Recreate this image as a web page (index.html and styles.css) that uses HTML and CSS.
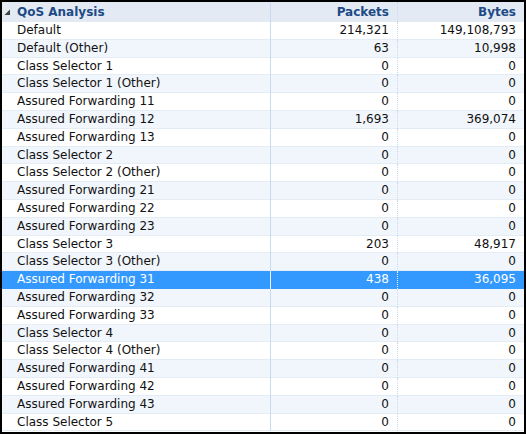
FILE: index.html
```html
<!DOCTYPE html>
<html>
<head>
<meta charset="utf-8">
<link rel="stylesheet" href="styles.css">
</head>
<body>
<div class="grid">
  <div class="row head">
    <div class="c1"><svg class="tri" width="7" height="7" viewBox="0 0 7 7"><polygon points="6,0.5 6,6 0.5,6" fill="#404040"/></svg>QoS Analysis</div>
    <div class="c2">Packets</div>
    <div class="c3">Bytes</div>
  </div>
  <div class="row"><div class="c1">Default</div><div class="c2">214,321</div><div class="c3">149,108,793</div></div>
  <div class="row alt"><div class="c1">Default (Other)</div><div class="c2">63</div><div class="c3">10,998</div></div>
  <div class="row"><div class="c1">Class Selector 1</div><div class="c2">0</div><div class="c3">0</div></div>
  <div class="row alt"><div class="c1">Class Selector 1 (Other)</div><div class="c2">0</div><div class="c3">0</div></div>
  <div class="row"><div class="c1">Assured Forwarding 11</div><div class="c2">0</div><div class="c3">0</div></div>
  <div class="row alt"><div class="c1">Assured Forwarding 12</div><div class="c2">1,693</div><div class="c3">369,074</div></div>
  <div class="row"><div class="c1">Assured Forwarding 13</div><div class="c2">0</div><div class="c3">0</div></div>
  <div class="row alt"><div class="c1">Class Selector 2</div><div class="c2">0</div><div class="c3">0</div></div>
  <div class="row"><div class="c1">Class Selector 2 (Other)</div><div class="c2">0</div><div class="c3">0</div></div>
  <div class="row alt"><div class="c1">Assured Forwarding 21</div><div class="c2">0</div><div class="c3">0</div></div>
  <div class="row"><div class="c1">Assured Forwarding 22</div><div class="c2">0</div><div class="c3">0</div></div>
  <div class="row alt"><div class="c1">Assured Forwarding 23</div><div class="c2">0</div><div class="c3">0</div></div>
  <div class="row"><div class="c1">Class Selector 3</div><div class="c2">203</div><div class="c3">48,917</div></div>
  <div class="row alt"><div class="c1">Class Selector 3 (Other)</div><div class="c2">0</div><div class="c3">0</div></div>
  <div class="row sel"><div class="c1">Assured Forwarding 31</div><div class="c2">438</div><div class="c3">36,095</div></div>
  <div class="row alt"><div class="c1">Assured Forwarding 32</div><div class="c2">0</div><div class="c3">0</div></div>
  <div class="row"><div class="c1">Assured Forwarding 33</div><div class="c2">0</div><div class="c3">0</div></div>
  <div class="row alt"><div class="c1">Class Selector 4</div><div class="c2">0</div><div class="c3">0</div></div>
  <div class="row"><div class="c1">Class Selector 4 (Other)</div><div class="c2">0</div><div class="c3">0</div></div>
  <div class="row alt"><div class="c1">Assured Forwarding 41</div><div class="c2">0</div><div class="c3">0</div></div>
  <div class="row"><div class="c1">Assured Forwarding 42</div><div class="c2">0</div><div class="c3">0</div></div>
  <div class="row alt"><div class="c1">Assured Forwarding 43</div><div class="c2">0</div><div class="c3">0</div></div>
  <div class="row"><div class="c1">Class Selector 5</div><div class="c2">0</div><div class="c3">0</div></div>
</div>
</body>
</html>
```
FILE: styles.css
```css
html, body {
  margin: 0;
  padding: 0;
  background: #fff;
}
.grid {
  box-sizing: border-box;
  width: 526px;
  height: 434px;
  border: 2px solid #000;
  overflow: hidden;
  display: grid;
  grid-template-rows: 20px;
  grid-auto-rows: 17.8px;
  align-content: start;
  font-family: "DejaVu Sans", Verdana, sans-serif;
  font-size: 12px;
  color: #111;
  background: #fff;
}
.row {
  display: grid;
  grid-template-columns: 269px 127px 1fr;
  line-height: 17px;
  box-shadow: inset 0 -1px 0 #e4ecf6;
  overflow: hidden;
}
.row.head {
  line-height: 20px;
  background: #e3eaf4;
  color: #1d4a86;
  font-weight: bold;
  box-shadow: none;
}
.row.alt {
  background: #f1f6fc;
}
.row.sel {
  background: #3399ff;
  color: #fff;
  box-shadow: none;
}
.c1 {
  position: relative;
  padding-left: 15px;
  white-space: nowrap;
  border-right: 1px solid #c9daf0;
}
.c2 {
  text-align: right;
  padding-right: 8px;
  border-right: 1px dotted #c9daf0;
}
.c3 {
  text-align: right;
  padding-right: 8px;
}
.sel .c1, .sel .c2 {
  border-right-color: #e8f2fe;
}
.tri {
  position: absolute;
  left: 2px;
  top: 7px;
}
```
